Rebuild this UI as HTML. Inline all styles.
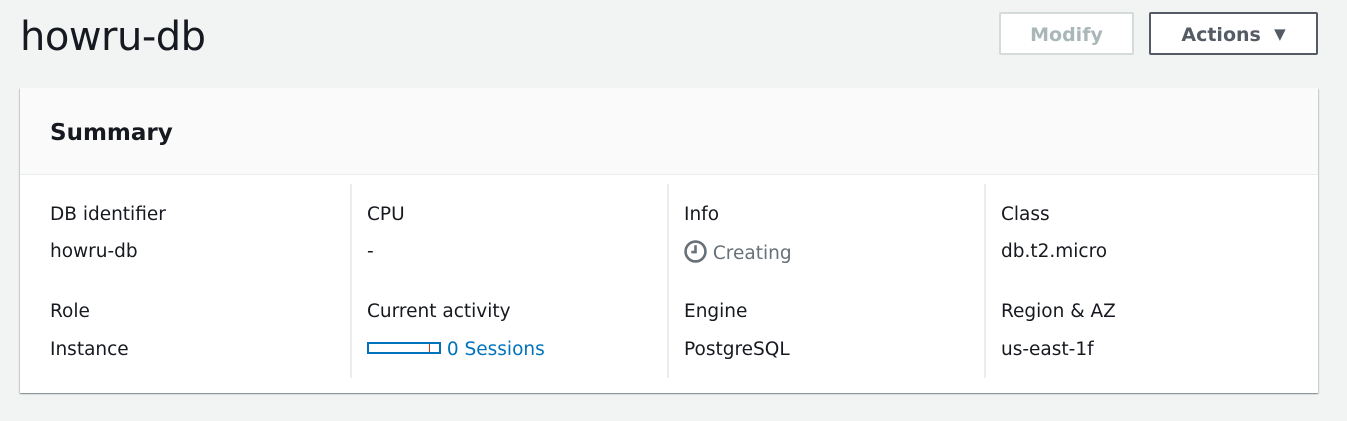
<!DOCTYPE html><html><head><style>
body{margin:0;width:1347px;height:421px;background:#f2f3f3;font-family:"DejaVu Sans","Liberation Sans",sans-serif;color:#16191f;position:relative;overflow:hidden}
.t{position:absolute;left:20px;top:12px;font-size:40px;line-height:50px;letter-spacing:-0.5px}
.btn{position:absolute;top:12px;height:43px;box-sizing:border-box;border:2px solid;border-radius:2px;background:#fff;font-weight:bold;font-size:19px;line-height:42px;text-align:center}
.p{position:absolute;left:20px;top:88px;width:1298px;height:305px;background:#fff;box-shadow:0 1px 1px 0 rgba(0,28,36,.3),1px 1px 1px 0 rgba(0,28,36,.15),-1px 1px 1px 0 rgba(0,28,36,.15)}
.h{height:87px;background:#fafafa;border-bottom:1px solid #eaeded;box-sizing:border-box;padding-left:30px;font-size:23px;font-weight:bold;line-height:90px}
.c{position:absolute;top:96px;height:194px;width:317px;box-sizing:border-box;padding-left:30px;font-size:18.5px}
.c+.c{border-left:2px solid #eaeded;padding-left:15px}
.c div{position:absolute;line-height:24px;white-space:nowrap}
</style></head><body>
<div class="t">howru-db</div>
<div class="btn" style="left:999px;width:135px;border-color:#d5dbdb;color:#aab7b8">Modify</div>
<div class="btn" style="left:1149px;width:169px;border-color:#545b64;color:#545b64">Actions&nbsp;&nbsp;<span style="font-size:15px;position:relative;top:-2px">▼</span></div>
<div class="p">
<div class="h">Summary</div>
<div class="c" style="left:0"><div style="top:19px;left:30px">DB identifier</div><div style="top:56px;left:30px">howru-db</div><div style="top:116px;left:30px">Role</div><div style="top:154px;left:30px">Instance</div></div>
<div class="c" style="left:330px"><div style="top:19px;left:15px">CPU</div><div style="top:56px;left:15px">-</div><div style="top:116px;left:15px">Current activity</div><div style="top:154px;left:15px;color:#0073bb"><span style="display:inline-block;width:70px;height:8px;border:2px solid #0073bb;vertical-align:1px;position:relative"><span style="position:absolute;left:60px;top:0;width:1px;height:8px;background:#d13212"></span></span> 0 Sessions</div></div>
<div class="c" style="left:647px"><div style="top:19px;left:15px">Info</div><div style="top:56px;left:15px;color:#687078"><svg width="23" height="23" viewBox="0 0 22 22" style="vertical-align:-4px"><circle cx="11" cy="11" r="9.5" fill="none" stroke="#687078" stroke-width="2.5"/><path d="M11 5v6.5H7" fill="none" stroke="#687078" stroke-width="2.5"/></svg> Creating</div><div style="top:116px;left:15px">Engine</div><div style="top:154px;left:15px">PostgreSQL</div></div>
<div class="c" style="left:964px"><div style="top:19px;left:15px">Class</div><div style="top:56px;left:15px">db.t2.micro</div><div style="top:116px;left:15px">Region &amp; AZ</div><div style="top:154px;left:15px">us-east-1f</div></div>
</div>
</body></html>
